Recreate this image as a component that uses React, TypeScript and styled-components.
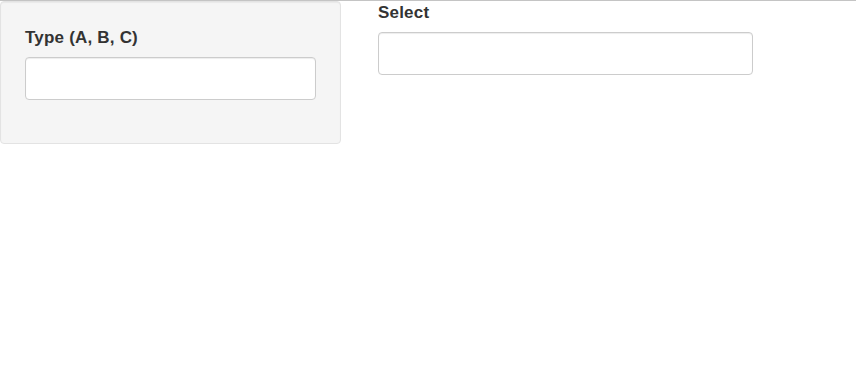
import React from "react";
import styled, { createGlobalStyle } from "styled-components";

const Global = createGlobalStyle`
  html, body { margin: 0; padding: 0; background: #ffffff; }
  body { font-family: "Liberation Sans", Arial, Helvetica, sans-serif; font-size: 14px; line-height: 20px; color: #333333; }
  * { box-sizing: border-box; }
`;

const TopRule = styled.div`
  height: 1px;
  background: #c4c4c4;
`;

const Row = styled.div`
  display: flex;
  align-items: flex-start;
`;

const Well = styled.div`
  width: 341px;
  min-height: 143px;
  padding: 26px 24px 42px 24px;
  background: #f5f5f5;
  border: 1px solid #e3e3e3;
  border-radius: 4px;
  box-shadow: inset 0 1px 1px rgba(0, 0, 0, 0.05);
`;

const Main = styled.div`
  margin-left: 37px;
  padding-top: 2px;
  width: 375px;
`;

const Label = styled.label<{ $gap: number }>`
  display: block;
  font-weight: 700;
  font-size: 17px;
  line-height: 20px;
  letter-spacing: 0.2px;
  color: #333333;
  margin-bottom: ${(p) => p.$gap}px;
`;

const Input = styled.input`
  display: block;
  width: 100%;
  height: 43px;
  padding: 6px 12px;
  font-family: inherit;
  font-size: 14px;
  color: #555555;
  background: #ffffff;
  border: 1px solid #cccccc;
  border-radius: 4px;
  box-shadow: inset 0 1px 1px rgba(0, 0, 0, 0.075);
  outline: none;
`;

export default function App() {
  return (
    <>
      <Global />
      <TopRule />
      <Row>
        <Well>
          <Label $gap={9}>Type (A, B, C)</Label>
          <Input type="text" />
        </Well>
        <Main>
          <Label $gap={9}>Select</Label>
          <Input type="text" />
        </Main>
      </Row>
    </>
  );
}
